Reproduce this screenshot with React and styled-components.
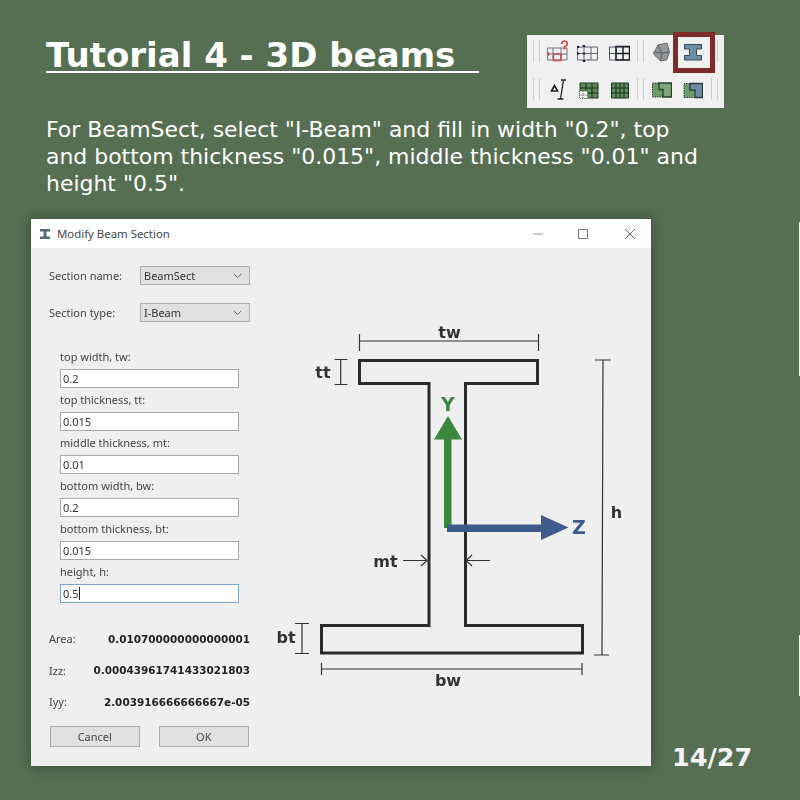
import React from "react";
import styled, { createGlobalStyle } from "styled-components";

const Global = createGlobalStyle`
  html, body { margin: 0; padding: 0; background: #566f53; }
  * { box-sizing: border-box; }
`;
const Slide = styled.div`
  position: relative; width: 800px; height: 800px; overflow: hidden;
  background: #566f53; color: #fff; font-family: "DejaVu Sans", sans-serif;
`;
const Header = styled.header`
  display: flex; justify-content: space-between; align-items: flex-start;
  padding: 32px 76px 0 46px; height: 116px;
`;
const Title = styled.h1`
  margin: 3px 0 0; font-size: 34px; line-height: 40px; font-weight: 700;
  text-decoration: underline; text-decoration-thickness: 2px; text-underline-offset: 4px;
  white-space: pre;
`;
const Toolbar = styled.div`
  position: relative; margin-top: 3px; width: 197px; height: 73px; background: #f0f0f0;
  display: flex; flex-direction: column; gap: 14px; padding: 5px 0 0 5px;
`;
const ToolRow = styled.div`display: flex; align-items: flex-start; height: 24px;`;
const Sep = styled.span`
  width: 1px; height: 22px; background: #cfcfcf; margin-left: ${p => p.$ml}px; flex: none;
`;
const Tool = styled.svg`
  width: ${p => p.$w}px; height: 24px; margin-left: ${p => p.$ml}px; flex: none; display: block;
  filter: blur(.3px);
`;
const Highlight = styled.span`
  position: absolute; left: 146px; top: -3px; width: 42px; height: 41px; border: 5px solid #7f2a2b;
`;
const Intro = styled.p`
  margin: 0 0 0 46px; width: 700px; height: 103px; font-size: 21.95px; line-height: 27px;
`;
const Bottom = styled.div`display: flex; align-items: flex-end; padding-left: 31px;`;
const Dialog = styled.section`
  width: 620px; height: 547px; background: #efefef; flex: none; color: #333;
  box-shadow: 0 0 14px rgba(0,0,0,.35), 0 0 1px #555;
  font-family: "Noto Sans", sans-serif; font-size: 11px;
`;
const TitleBar = styled.div`
  display: flex; align-items: center; height: 29px; background: #fff; padding-left: 8px;
`;
const WinTitle = styled.span`margin-left: 6px; font-size: 11.4px; color: #444; flex: 1;`;
const WinBtn = styled.svg`width: ${p => p.$w || 46}px; height: 29px; flex: none; display: block;`;
const Body = styled.div`display: flex; filter: blur(.3px);`;
const Form = styled.div`width: 239px; flex: none; padding: 18px 0 0 18px; height: 518px; display: flex; flex-direction: column;`;
const ComboRow = styled.div`display: flex; align-items: center; height: 19px; margin-bottom: 18px;`;
const ComboLabel = styled.label`width: 91px; flex: none; color: #444;`;
const Combo = styled.div`
  width: 110px; height: 19px; background: #e1e1e1; border: 1px solid #adadad; padding: 0 7px 0 3px;
  display: flex; align-items: center; justify-content: space-between; color: #333;
`;
const Fields = styled.div`padding: 5px 0 0 11px; display: flex; flex-direction: column;`;
const Field = styled.div`display: flex; flex-direction: column; height: 43px;`;
const FieldLabel = styled.label`height: 24px; line-height: 24px; color: #444;`;
const Input = styled.div`
  width: 179px; height: 19px; background: #fff; border: 1px solid ${p => p.$focus ? "#7da2ce" : "#a9a9a9"};
  padding-left: 2px; line-height: 18px; color: #333;
`;
const Caret = styled.span`display: inline-block; width: 1px; height: 13px; background: #222; vertical-align: -2px;`;
const Results = styled.div`width: 201px; padding-top: 20px; display: flex; flex-direction: column;`;
const Result = styled.div`display: flex; justify-content: space-between; align-items: center; height: 31.5px; color: #444;`;
const ResultValue = styled.b`font-family: "DejaVu Sans", sans-serif; font-size: 10.45px; color: #222;`;
const Buttons = styled.div`display: flex; gap: 19.5px; padding: 8px 0 0 1px;`;
const Button = styled.div`
  width: 89.5px; height: 21px; background: #e1e1e1; border: 1px solid #adadad; color: #444;
  display: flex; align-items: center; justify-content: center;
`;
const Diagram = styled.svg`width: 380px; height: 400px; margin-top: 62px; flex: none; display: block;`;
const PageNo = styled.div`
  margin: 0 0 -6px 21px; font-size: 25.5px; line-height: 30px; font-weight: 700; color: #f4f4f4;
`;
const EdgeMark = styled.span`
  position: absolute; right: 0; width: 1px; background: #f4f4f4;
  top: ${p => p.$top}px; height: ${p => p.$h}px;
`;

const Chevron = () => (
  <svg width="9" height="6" viewBox="0 0 9 6"><path d="M.8 1l3.700 3.500L8.200 1" fill="none" stroke="#666" /></svg>
);
const fields = [
  ["top width, tw:", "0.2"],
  ["top thickness, tt:", "0.015"],
  ["middle thickness, mt:", "0.01"],
  ["bottom width, bw:", "0.2"],
  ["bottom thickness, bt:", "0.015"],
  ["height, h:", "0.5"],
];

export default function App() {
  return (
    <Slide>
      <Global />
      <Header>
        <Title>{"Tutorial 4 - 3D beams  "}</Title>
        <Toolbar>
          <ToolRow>
            <Sep $ml={1} /><Sep $ml={4.6} />
            <Tool $w={21} $ml={7.4} viewBox="0 0 21 24">
              <path d="M.5 8h19.500v12H.5zM.5 14h19.500M6 8v12M14 8v12" fill="none" stroke="#6f7680" />
              <path d="M6.500 14h7.500v6.500H6.500z" fill="none" stroke="#cc4a4a" strokeWidth="1.500" />
              <circle cx="1" cy="14" r="1.800" fill="#cc4a4a" />
              <path d="M14.500 4q.5-3 3-3t3 2.500q0 2-3 3.500v2.500" fill="none" stroke="#cc4a4a" strokeWidth="1.700" />
            </Tool>
            <Tool $w={21} $ml={9} viewBox="0 0 21 24">
              <path d="M.5 7h20v13H.5zM.5 13.500h20M7 7v13M14 7v13" fill="none" stroke="#667" />
              <path d="M7 5v2M7 12.500v2M7 20v2M1 6v2M1 12.500v2" stroke="#1c2230" strokeWidth="2.400" />
            </Tool>
            <Tool $w={21} $ml={11} viewBox="0 0 21 24">
              <path d="M.5 7h20v13H.5zM.5 13.500h7M7 7v13" fill="none" stroke="#556" />
              <path d="M7 6.500h13.500v13.500H7zM7 13.500h13.500M14 6.500v13.500" fill="none" stroke="#1c2230" strokeWidth="1.500" />
            </Tool>
            <Sep $ml={7} /><Sep $ml={5} />
            <Tool $w={18} $ml={8} viewBox="0 0 18 24">
              <path d="M6 5l9-2 2.500 9-3 8-6 1-7-7z" fill="#949a9c" stroke="#666" />
              <path d="M6 5l4 8 7.500-1M10 13l-1.500 8M10 13l-8.500-1" fill="none" stroke="#5a6064" />
            </Tool>
            <Tool $w={18} $ml={14} viewBox="0 0 18 24">
              <path d="M.5 4.500h17v4.500h-5v6.500h5V20H.5v-4.500h5V9h-5z" fill="#6d8fa6" stroke="#3a4a55" />
            </Tool>
            <Sep $ml={15} />
          </ToolRow>
          <ToolRow>
            <Sep $ml={1} /><Sep $ml={4.6} />
            <Tool $w={18} $ml={9} viewBox="0 0 18 24">
              <path d="M2.500 13l3-5.500 3 5.500z" fill="none" stroke="#222" strokeWidth="1.600" />
              <path d="M14.500 2l-3 19M12 2h5M8.500 21h6" fill="none" stroke="#222" strokeWidth="1.300" />
            </Tool>
            <Tool $w={20} $ml={12} viewBox="0 0 20 24">
              <path d="M1 5h18v15H1z" fill="#5b8d5b" stroke="#25352a" />
              <path d="M1 10h18M1 15h18M7 5v15M13 5v15" stroke="#1c2a1c" />
              <path d="M.5 13h8v7.500h-8z" fill="#f4f4f4" />
              <path d="M.5 13h8v7.500h-8zM.5 17h8M4 13v7.500" fill="none" stroke="#666" strokeDasharray="1 1" />
            </Tool>
            <Tool $w={18} $ml={12} viewBox="0 0 18 24">
              <path d="M.5 5h17v15H.5z" fill="#5b8d5b" stroke="#1f2f1f" />
              <path d="M.5 10h17M.5 15h17M5 5v15M9 5v15M13 5v15" stroke="#1c2a1c" />
            </Tool>
            <Sep $ml={8} /><Sep $ml={5} />
            <Tool $w={20} $ml={8} viewBox="0 0 20 24">
              <path d="M.5 5h19v14H.5z" fill="#6a9c66" />
              <path d="M7 5h12.500v14H11v-7.500H7z" fill="#7fa878" stroke="#2b3b33" strokeWidth="1.300" />
              <path d="M7 5H.5v14H11" fill="none" stroke="#2b3b33" strokeDasharray="1.500 1" />
            </Tool>
            <Tool $w={20} $ml={11} viewBox="0 0 20 24">
              <path d="M1 5.500h18.500v14H1z" fill="#6a9c66" />
              <path d="M7 5.500h12.500v14H12V12H7z" fill="#6d8fa6" stroke="#2b3b43" strokeWidth="1.300" />
              <path d="M7 5.500H1v14h11" fill="none" stroke="#2b3b33" strokeDasharray="1.500 1" />
            </Tool>
            <Sep $ml={8} /><Sep $ml={5} />
          </ToolRow>
          <Highlight />
        </Toolbar>
      </Header>
      <Intro>
        For BeamSect, select "I-Beam" and fill in width "0.2", top<br />
        and bottom thickness "0.015", middle thickness "0.01" and<br />
        height "0.5".
      </Intro>
      <Bottom>
        <Dialog>
          <TitleBar>
            <svg width="12" height="12" viewBox="0 0 12 12">
              <path d="M1 1h10v2.500H7.500v5H11V11H1V8.500h3.500v-5H1z" fill="#4f6b7c" />
            </svg>
            <WinTitle>Modify Beam Section</WinTitle>
            <WinBtn viewBox="0 0 46 29"><path d="M18 15h10" stroke="#999" strokeWidth="1" /></WinBtn>
            <WinBtn viewBox="0 0 46 29"><path d="M17.500 10.500h9v9h-9z" fill="none" stroke="#777" /></WinBtn>
            <WinBtn $w={44} viewBox="0 0 44 29"><path d="M18 10l10 10M28 10L18 20" stroke="#666" /></WinBtn>
          </TitleBar>
          <Body>
            <Form>
              <ComboRow>
                <ComboLabel>Section name:</ComboLabel>
                <Combo>BeamSect<Chevron /></Combo>
              </ComboRow>
              <ComboRow>
                <ComboLabel>Section type:</ComboLabel>
                <Combo>I-Beam<Chevron /></Combo>
              </ComboRow>
              <Fields>
                {fields.map(([label, value], i) => (
                  <Field key={label}>
                    <FieldLabel>{label}</FieldLabel>
                    <Input $focus={i === 5}>{value}{i === 5 && <Caret />}</Input>
                  </Field>
                ))}
              </Fields>
              <Results>
                <Result>Area:<ResultValue>0.010700000000000001</ResultValue></Result>
                <Result>Izz:<ResultValue>0.00043961741433021803</ResultValue></Result>
                <Result>Iyy:<ResultValue>2.003916666666667e-05</ResultValue></Result>
              </Results>
              <Buttons>
                <Button>Cancel</Button>
                <Button>OK</Button>
              </Buttons>
            </Form>
            <Diagram viewBox="270 310 380 400">
              <g fill="none" stroke="#2b2b2b" strokeWidth="3">
                <path d="M359.500 360.500H537.500V383.500H465.500V625.500H582.500V653H321.500V625.500H429V383.500H359.500Z" />
              </g>
              <g fill="none" stroke="#333" strokeWidth="1.200">
                <path d="M359.500 334v17M538.500 334v17M359.500 341h179" />
                <path d="M334.500 359.500h13M334.500 384.500h13M340.700 359.500v25" />
                <path d="M595 360h16M594 655h15M603 360l-1 295" />
                <path d="M295 623.500h14M295 653.500h14M302 623.500v30" />
                <path d="M321.500 663v12M582 663v12M321.500 669H582" />
                <path d="M403 560.500h24M421 555l6 5.500-6 5.500M490 560.500h-24M472 555l-6 5.500 6 5.500" />
              </g>
              <g fill="#3c883f">
                <path d="M444 438h7.500v90H444zM448 416l14 23.500h-28z" />
              </g>
              <g fill="#3e5b8c">
                <path d="M447 524.500h95v7.500h-95zM541 515l27.500 12.500L541 540z" />
              </g>
              <g fontFamily="'DejaVu Sans', sans-serif" fontWeight="700" fill="#333" fontSize="16" textAnchor="middle">
                <text x="449.500" y="338">tw</text>
                <text x="323" y="378">tt</text>
                <text x="616.500" y="518">h</text>
                <text x="385.500" y="567">mt</text>
                <text x="286" y="643">bt</text>
                <text x="448" y="686">bw</text>
                <text x="448" y="411" fontSize="19" fill="#3c883f">Y</text>
                <text x="579" y="534" fontSize="19" fill="#3e5b8c">Z</text>
              </g>
            </Diagram>
          </Body>
        </Dialog>
        <PageNo>14/27</PageNo>
      </Bottom>
      <EdgeMark $top={222} $h={154} />
      <EdgeMark $top={635} $h={61} />
    </Slide>
  );
}
